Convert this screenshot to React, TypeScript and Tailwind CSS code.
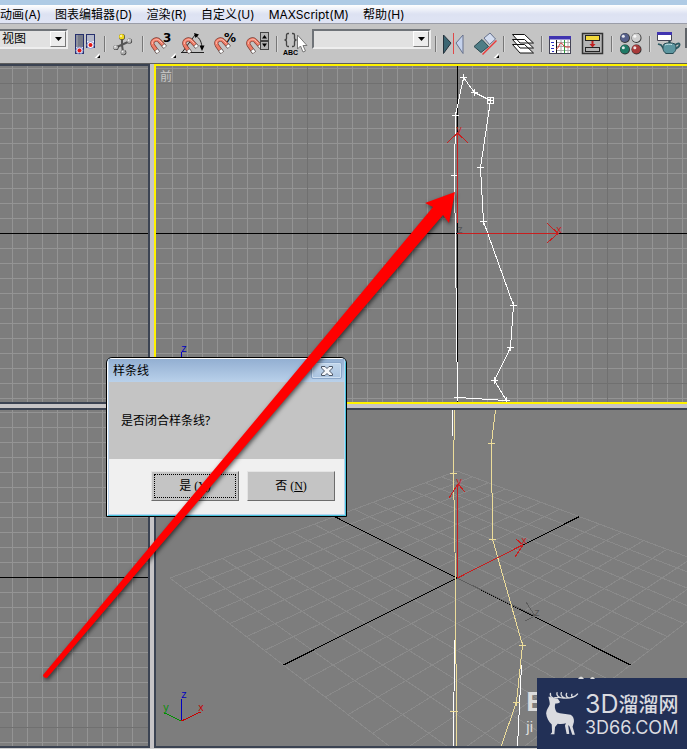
import type { ReactNode } from "react";

/* ─────────────────────────────────────────
   TOOLBAR PARTS
───────────────────────────────────────── */
function Tool({ label, children }: { label: string; children: ReactNode }) {
  return (
    <button type="button" aria-label={label} className="h-6 w-6 shrink-0">
      <svg viewBox="0 0 24 24" className="h-6 w-6 overflow-visible">
        {children}
      </svg>
    </button>
  );
}

function Separator({ className = "mx-1.5" }: { className?: string }) {
  return (
    <div
      className={`h-4 w-0.5 shrink-0 border-l border-[#777] bg-[#d8d8d8] ${className}`}
    />
  );
}

function Dropdown({
  label,
  options,
  className,
}: {
  label: string;
  options: string[];
  className: string;
}) {
  return (
    <div
      className={`relative mt-[5px] h-5 shrink-0 self-start border-2 border-t-[#6f7378] border-r-[#eee] border-b-[#eee] border-l-[#6f7378] bg-[#e1e1e1] ${className}`}
    >
      <select
        aria-label={label}
        className="block h-4 w-full appearance-none pl-0.5 text-[12px] leading-4 text-black outline-none"
      >
        {options.map((o) => (
          <option key={o}>{o}</option>
        ))}
      </select>
      <span className="pointer-events-none absolute top-0 right-0 flex h-4 w-4 items-center justify-center border border-t-white border-r-[#777] border-b-[#777] border-l-white bg-[#ececec]">
        <svg viewBox="0 0 7 4" className="h-1 w-[7px]">
          <path d="M0 0h7L3.5 4z" />
        </svg>
      </span>
    </div>
  );
}

function Flyout() {
  return (
    <g>
      <path d="M25.5 21v5h-5z" fill="#fff" />
      <path d="M26 23v3h-3z" />
    </g>
  );
}

function Magnet() {
  return (
    <g fill="none">
      <path
        d="M15 15 9.500 9C6.500 5.500 0 9 3 13.500L8 20.500"
        stroke="#7c3a30"
        strokeWidth="4.200"
      />
      <path
        d="M15 15 9.500 9C6.500 5.500 0 9 3 13.500L8 20.500"
        stroke="#ee7d68"
        strokeWidth="3"
      />
      <path
        d="M12.500 11.500 9 8C6.500 6 1.500 8.500 2.500 12"
        stroke="#ffb9aa"
        strokeWidth="1"
      />
      <path d="m13 12.800 2.300 2.500M6 17.700l2.300 3.100" stroke="#666" strokeWidth="4.200" />
      <path d="m13.300 13.200 1.700 1.800M6.300 18.200l1.700 2.200" stroke="#fff" strokeWidth="3" />
    </g>
  );
}

function Ball({
  x,
  y,
  r,
  fill,
}: {
  x: number;
  y: number;
  r: number;
  fill: string;
}) {
  return (
    <g>
      <circle cx={x} cy={y} r={r} fill="#333" />
      <circle cx={x - 0.3} cy={y - 0.3} r={r * 0.88} fill={fill} />
      <circle cx={x - r / 3} cy={y - r / 3} r={r * 0.3} fill="#fff" opacity=".85" />
    </g>
  );
}

function Toolbar() {
  return (
    <div className="flex h-10 shrink-0 items-center overflow-hidden border-b border-[#5d5d5d] bg-[#c4c4c4]">
      <Dropdown
        label="参考坐标系"
        options={["视图", "屏幕", "世界"]}
        className="mr-1.5 w-[68px] border-l-0"
      />
      <Tool label="使用轴点中心">
        <rect x="1.500" y="2.500" width="8" height="19" fill="#e4e6f2" stroke="#26306e" />
        <rect x="2" y="3" width="7" height="12" fill="#777b88" />
        <path d="M3 3v12" stroke="#a5a9b5" />
        <circle cx="5.500" cy="18.500" r="3.500" fill="none" stroke="#8a94d0" />
        <circle cx="5.500" cy="18.500" r="2" fill="#e01818" />
        <rect x="12.500" y="2.500" width="8" height="13" fill="#f4f5fb" stroke="#26306e" />
        <rect x="13" y="3" width="7" height="6" fill="#b5b9c9" />
        <circle cx="16.500" cy="13" r="3.500" fill="#fff" stroke="#8a94d0" />
        <circle cx="16.500" cy="13" r="2" fill="#e01818" />
        <Flyout />
      </Tool>
      <Separator />
      <Tool label="选择并操纵">
        <path
          d="M10 5v9M17 9.500 4 15.500M10 13l1 7"
          stroke="#555"
          strokeWidth="2"
          fill="none"
        />
        <Ball x={10} y={5} r={3} fill="#f2d91c" />
        <Ball x={17.5} y={9} r={2.6} fill="#bbb" />
        <Ball x={4} y={15.5} r={2.6} fill="#bbb" />
        <Ball x={11.5} y={20.5} r={2.8} fill="#aaa" />
      </Tool>
      <Separator />
      <div className="flex gap-2">
        <Tool label="捕捉开关">
          <Magnet />
          <text x="13" y="10" className="font-['DejaVu_Sans'] text-[12px] font-bold">
            3
          </text>
          <Flyout />
        </Tool>
        <Tool label="角度捕捉">
          <path d="M-1 20.500h23M0 20.500 13 3" stroke="#222" />
          <path d="M14 4c4 2 6 7 6 13" fill="none" stroke="#222" />
          <path d="m12 1 5 1.500-3.500 3.500zM17.500 13.500h5L20 19z" />
          <Magnet />
        </Tool>
        <Tool label="百分比捕捉">
          <Magnet />
          <text x="10" y="10" className="font-['DejaVu_Sans'] text-[12px] font-bold">
            %
          </text>
        </Tool>
        <Tool label="微调器捕捉">
          <Magnet />
          <rect x="14" y="0" width="9" height="18" fill="#444" />
          <path d="M15 1h7v7h-7zM15 10h7v7h-7z" fill="#b4b4b4" />
          <path d="m18.500 3 2.500 3.500h-5zM16 11.500h5L18.500 15z" />
        </Tool>
      </div>
      <Separator />
      <Tool label="编辑命名选择集">
        <path
          d="M5 1.500H4Q2.500 1.500 2.500 3v3Q2.500 8 .5 8q2 0 2 2v3q0 1.500 1.500 1.500h1M8 1.500h1q1.500 0 1.500 1.500v3q0 2 2 2-2 0-2 2v3q0 1.500-1.500 1.500H8"
          fill="none"
          stroke="#444"
          strokeWidth="1.300"
        />
        <text x="-1" y="23" className="font-['Liberation_Sans'] text-[7px] font-bold">
          ABC
        </text>
        <path
          d="M13.500 3v14l3-3 2.500 6 2.500-1-2.500-5.500h4z"
          fill="#fff"
          stroke="#777"
        />
      </Tool>
      <Dropdown
        label="命名选择集"
        options={[""]}
        className="ml-1 w-[119px] min-w-0"
      />
      <Separator className="mx-1" />
      <div className="flex gap-2">
        <Tool label="镜像">
          <path d="M2.500 3v18.500L10 11z" fill="#3c6673" stroke="#24323c" />
          <path d="M12.500 1v21" stroke="#e04848" />
          <path d="M22 3v18.500L15 11z" fill="#c5d2ec" stroke="#66718c" />
        </Tool>
        <Tool label="对齐">
          <path d="m1 14.500 8-7 6.500 7-7.500 6z" fill="#4e7d86" stroke="#2b4950" />
          <path d="m11 6 6-5 5.500 6-6 5.500z" fill="#d4ddf0" stroke="#66718c" />
          <path d="m9.500 22.500 14-14" stroke="#e83a3a" strokeWidth="1.500" />
          <Flyout />
        </Tool>
      </div>
      <Separator />
      <Tool label="层管理器">
        <path
          d="M1.500 12.500h12l9 8.500H9zM1.500 7.500h12l9 8.500H9zM1.500 2.500h12l9 8.500H9z"
          fill="#fff"
          stroke="#111"
        />
      </Tool>
      <Separator />
      <div className="flex gap-2">
        <Tool label="曲线编辑器">
          <rect x=".5" y="4.500" width="21" height="17" fill="#fff" stroke="#445" />
          <path d="M0 4h22v3.500H0z" fill="#4034b0" />
          <path d="M7.500 8v13" stroke="#111" />
          <path d="M8 10.500h13M8 14.500h13M8 18.500h13M12 8v13M19 8v13" stroke="#aaa" />
          <path d="M2 10.500h3M3 13.500h2M2 16.500h3M3 19.500h2" stroke="#2a30c0" />
          <path d="M15.500 8v13" stroke="#30a040" />
          <path d="M7 17c3 0 3-6 5-6s2 4 5 4h4" fill="none" stroke="#d03838" />
        </Tool>
        <Tool label="图解视图">
          <rect x="1.500" y="1.500" width="20" height="20" fill="#b4b4b4" stroke="#333" strokeWidth="1.500" />
          <rect x="4.500" y="3.500" width="14" height="5" fill="#f2d93c" stroke="#222" />
          <path d="M10.500 9h2v3h2l-3 3.500-3-3.500h2z" fill="#c02020" />
          <rect x="4.500" y="15.500" width="14" height="4" fill="#b4b4b4" stroke="#222" />
        </Tool>
      </div>
      <Separator />
      <Tool label="材质编辑器">
        <Ball x={6} y={6} r={5} fill="#56608a" />
        <Ball x={17.5} y={6} r={5} fill="#cfcfcf" />
        <Ball x={6} y={17.5} r={5} fill="#1f7a66" />
        <Ball x={17.5} y={17.5} r={5} fill="#a83a3a" />
      </Tool>
      <Separator />
      <Tool label="渲染场景">
        <path d="M.5.5h14v8H.5z" fill="#fff" stroke="#445" />
        <path d="M0 0h15v3H0z" fill="#4034b0" />
        <path
          d="m7 17-3-4-3-1M18 13c3-2 5-2 4.500 0s-2 3-5 4"
          fill="none"
          stroke="#2b5a62"
          strokeWidth="1.800"
        />
        <path
          d="M7 12c3-1.500 8-1.500 11 0 2 4 1 7-2 9.500H9c-3-2-4-5.500-2-9.500z"
          fill="#5c96a0"
          stroke="#264a52"
        />
        <path d="M8 13c2-1 5-1 7-.5" stroke="#cfe8ec" fill="none" />
        <circle cx="12.500" cy="10" r="1.300" fill="#264a52" />
      </Tool>
      <div className="mt-1 ml-1 h-5 grow self-start border-l-2 border-[#5f6368]" />
    </div>
  );
}

/* ─────────────────────────────────────────
   VIEWPORTS
───────────────────────────────────────── */
const menus = [
  "动画(A)",
  "图表编辑器(D)",
  "渲染(R)",
  "自定义(U)",
  "MAXScript(M)",
  "帮助(H)",
];

type Point = [number, number];

function range(from: number, to: number, step: number) {
  const out: number[] = [];
  for (let v = from; v <= to; v += step) out.push(v);
  return out;
}

function FlatGrid({
  xs,
  ys,
  darkX = [],
  darkY = [],
}: {
  xs: number[];
  ys: number[];
  darkX?: number[];
  darkY?: number[];
}) {
  return (
    <g fill="#949494">
      {xs.map((x) => (
        <rect key={`x${x}`} x={x} y="0" width="1" height="2000" />
      ))}
      {ys.map((y) => (
        <rect key={`y${y}`} x="0" y={y} width="2000" height="1" />
      ))}
      {darkX.map((x) => (
        <rect key={`dx${x}`} x={x} y="0" width="1" height="2000" fill="#707070" />
      ))}
      {darkY.map((y) => (
        <rect key={`dy${y}`} x="0" y={y} width="2000" height="1" fill="#707070" />
      ))}
    </g>
  );
}

function Vertices({ points, color }: { points: Point[]; color: string }) {
  return (
    <path
      d={points.map(([x, y]) => `M${x - 3} ${y + 0.5}h7M${x + 0.5} ${y - 3}v7`).join("")}
      stroke={color}
    />
  );
}

const axisText = "font-['Liberation_Mono',monospace] text-[10px]";

function SideViewport({ top, axis, dark }: { top: number; axis: number; dark: number }) {
  return (
    <section className="relative overflow-hidden border-y-2 border-r-2 border-[#3b4352] bg-[#7d7d7d]">
      <svg
        viewBox={`0 ${top} 148 336`}
        preserveAspectRatio="xMinYMin slice"
        shapeRendering="crispEdges"
        className="absolute inset-0 h-full w-full"
      >
        <FlatGrid
          xs={range(12, 132, 15)}
          ys={range(axis - 165, axis + 180, 15)}
          darkY={[dark]}
        />
        <rect x="0" y={axis} width="2000" height="1" fill="#000" />
      </svg>
    </section>
  );
}

const frontShape: Point[] = [
  [463, 77],
  [474, 92],
  [490, 100],
  [480, 167],
  [483, 221],
  [513, 305],
  [510, 347],
  [494, 380],
  [506, 400],
  [457, 397],
  [454, 175],
  [455, 115],
];

function FrontViewport() {
  return (
    <section className="relative overflow-hidden border-y-2 border-l-2 border-[#fff200] bg-[#7d7d7d]">
      <svg
        viewBox="156 66 531 336"
        preserveAspectRatio="xMinYMin slice"
        shapeRendering="crispEdges"
        className="absolute inset-0 h-full w-full"
      >
        <FlatGrid
          xs={range(172, 1000, 15)}
          ys={range(68, 398, 15)}
          darkX={[307, 607]}
          darkY={[83, 383]}
        />
        <rect x="457" y="60" width="1" height="350" />
        <rect x="150" y="233" width="1000" height="1" />
        <polygon
          points={frontShape.map(([x, y]) => `${x + 0.5},${y + 0.5}`).join(" ")}
          fill="none"
          stroke="#fff"
        />
        <Vertices points={frontShape} color="#fff" />
        <path d="M487.500 97.500h6v6h-6z" stroke="#fff" fill="none" />
        <rect x="457" y="133" width="1" height="90" fill="#c81e1e" />
        <rect x="457" y="233" width="101" height="1" fill="#c81e1e" />
        <path
          d="m447 143 10.500-10 10.500 10M547 223l11 10.500L547 243"
          stroke="#c81e1e"
          fill="none"
        />
        <text x="456" y="133" fill="#c81e1e" className={axisText}>
          y
        </text>
        <text x="556" y="233" fill="#c81e1e" className={axisText}>
          x
        </text>
        <text x="457" y="233" fill="#555" className={axisText}>
          z
        </text>
        <path d="M181.500 352v25" stroke="#0000c0" />
        <text x="181" y="352" fill="#0000c0" className={axisText}>
          z
        </text>
      </svg>
      <p className="relative px-1 py-[3px] text-[12px] leading-4 text-[#c8c8c8]">
        前
      </p>
    </section>
  );
}

/* ground plane cell (u, v) to screen */
function project(u: number, v: number): Point {
  const w = 1 - 0.02469 * (u + v);
  return [457 + (20.5 * (u - v)) / w, 161.4 + 416.6 / w];
}

function groundLine(a: Point, b: Point) {
  const [x1, y1] = project(a[0], a[1]);
  const [x2, y2] = project(b[0], b[1]);
  return `M${x1.toFixed(1)} ${y1.toFixed(1)}L${x2.toFixed(1)} ${y2.toFixed(1)}`;
}

function PerspectiveViewport() {
  const steps = range(-7, 7, 1).filter((n) => n !== 0);
  const grid = steps
    .map((n) => groundLine([n, -7], [n, 7]) + groundLine([-7, n], [7, n]))
    .join("");
  return (
    <section className="relative overflow-hidden border-y-2 border-l-2 border-[#3b4352] bg-[#7d7d7d]">
      <svg
        viewBox="156 410 531 336"
        preserveAspectRatio="xMinYMin slice"
        shapeRendering="crispEdges"
        className="absolute inset-0 h-full w-full"
        fill="none"
      >
        <path d={grid} stroke="#8a8a8a" />
        <path
          d={groundLine([0, -7], [0, 7]) + groundLine([-7, 0], [7, 0])}
          stroke="#000"
        />
        <path d="m457 578 78 38M526 602l9 14-10 5" stroke="#5e5e5e" />
        <text x="534" y="616" fill="#555" className={axisText}>
          z
        </text>
        <path d="M452.500 410v26M454.500 640l-1 106M521.500 665l-4 81" stroke="#fff" />
        <path
          d="m454.500 410-1 63 2 105 1 168M495.500 410l-4 33 1 96 30 106-6 57-16 46"
          stroke="#ecdc9a"
        />
        <path
          d="M450 473.500h7M488 443.500h7M489 539.500h7M519 645.500h7M522.500 642v7M513 702.500h7M516.500 699v7M450 711.500h8"
          stroke="#ecdc9a"
        />
        <g stroke="#c81e1e">
          <path d="M457.500 578v-94M457.500 578l65-33" />
          <path d="m449 498 9-14 7 8M516 539l7 6-8 12" />
        </g>
        <text x="456" y="485" fill="#c81e1e" className={axisText}>
          y
        </text>
        <text x="521" y="544" fill="#c81e1e" className={axisText}>
          x
        </text>
        <path d="M181.500 721v-22" stroke="#0000c0" />
        <path d="m181.500 721-17-8" stroke="#009000" />
        <path d="m181.500 721 19-9" stroke="#c80000" />
        <text x="181" y="698" fill="#0000c0" className={axisText}>
          z
        </text>
        <text x="163" y="711" fill="#009000" className={axisText}>
          y
        </text>
        <text x="198" y="711" fill="#c80000" className={axisText}>
          x
        </text>
      </svg>
    </section>
  );
}

/* ─────────────────────────────────────────
   OVERLAYS
───────────────────────────────────────── */
function CloseShapeDialog() {
  return (
    <div
      role="dialog"
      aria-labelledby="dialog-title"
      className="absolute top-[293px] left-[106px] w-[241px] overflow-hidden rounded-t-md border border-black bg-[#a9cbe9]"
    >
      <div className="rounded-t-[5px] border border-t-white border-r-[#48c4dc] border-b-[#48c4dc] border-l-white">
        <div className="border-x border-b border-[#b9d3ee]">
          <header className="flex h-[23px] items-center justify-between bg-linear-to-b from-[#93afd2] to-[#b9d1ea] pr-0.5 pl-1">
            <h1 id="dialog-title" className="text-[12px] leading-4 text-black">
              样条线
            </h1>
            <button
              type="button"
              aria-label="关闭"
              className="flex h-[17px] w-[31px] items-center justify-center rounded-[2px] border border-[#8ba7c9] bg-linear-to-b from-[#c3d7ec] to-[#a9c3e0] ring-1 ring-[#cfe0f2] ring-inset"
            >
              <svg viewBox="0 0 12 10" className="h-2.5 w-3">
                <path
                  d="M.5.5h3.500L6 2.500l2-2h3.500v1.500L8.500 5l3 3v1.500H8l-2-2-2 2H.5V8l3-3-3-3z"
                  fill="#f3f6fa"
                  stroke="#4c5666"
                />
              </svg>
            </button>
          </header>
          <p className="bg-[#c4c4c4] px-3 py-[30px] text-[12px] leading-[17px] text-black">
            是否闭合样条线?
          </p>
          <footer className="flex justify-end gap-2 bg-[#f0f0f0] pt-3 pr-[9px] pb-[13px] font-['Liberation_Serif','Noto_Sans_CJK_SC',serif] text-[12px] leading-4 text-black">
            <button
              type="button"
              className="h-[30px] w-[88px] border border-t-[#e4e4e4] border-r-[#6c6c6c] border-b-[#6c6c6c] border-l-[#e4e4e4] bg-[#c4c4c4] p-0.5"
            >
              <span className="flex h-full items-center justify-center border border-dotted border-black">
                是&nbsp;(<u>Y</u>)
              </span>
            </button>
            <button
              type="button"
              className="flex h-[30px] w-[88px] items-center justify-center border border-t-[#e4e4e4] border-r-[#6c6c6c] border-b-[#6c6c6c] border-l-[#e4e4e4] bg-[#c4c4c4]"
            >
              否&nbsp;(<u>N</u>)
            </button>
          </footer>
        </div>
      </div>
    </div>
  );
}

function Arrow() {
  return (
    <svg
      viewBox="40 185 420 500"
      className="pointer-events-none absolute top-[121px] left-10 h-[500px] w-[420px] overflow-visible drop-shadow-[1px_2px_2px_rgba(0,0,0,0.6)]"
    >
      <path
        d="M455 192 425 203l8 4L43 675q0 3 4 3L443 215l6 8z"
        fill="#ff0000"
      />
    </svg>
  );
}

function Watermark() {
  return (
    <div className="absolute right-0 -bottom-px flex items-end">
      <div className="pb-3.5 font-['Liberation_Sans',sans-serif] text-[#dcdcdc]">
        <p className="text-[28px] leading-8 font-bold">E</p>
        <p className="text-[15px] leading-[17px]">ji</p>
      </div>
      <div className="relative -ml-2 flex h-[71px] w-[150px] items-center bg-[#223056] pl-2 text-[#dadbe0]">
        <svg viewBox="0 0 20 3" className="absolute -top-[2px] left-10 h-[3px] w-5">
          <path d="M1 3q3-5 6 0zM13 3q2.500-4 5 0z" fill="#dcdcdc" />
        </svg>
        <svg viewBox="135 335 102 136" className="h-[45px] w-[34px] shrink-0">
          <g fill="none" stroke="#dadbe0" strokeWidth="4" strokeLinecap="round">
            <path d="M158 357c8-3 14-4 24-2 18 3 38 3 51-11M181 355c-8-2-12-9-10-15M194 356c-9-4-13-10-10-16M207 357c-6-3-10-9-7-15M219 353c-4-2-5-5-3-8M157 355c-5-3-7-8-6-13" />
          </g>
          <path
            d="M145 352c6 0 10 2 13 4l15 2 7 10c-2 4-9 5-14 5-3 8-2 18 4 26 12 6 29 4 42 8 8 4 11 13 10 22l-4 14 7 24h-8l-8-24-7-12c-10 4-20 5-29 3l-8 10-2 22h-12l5-6-1-24c-9-8-16-21-17-34 1-10 8-18 11-27 0-8-2-13-4-23z"
            fill="#dadbe0"
          />
          <path d="m210 431-5 10 3 24h-8l-5-25 4-12z" fill="#dadbe0" />
        </svg>
        <div className="ml-1.5 whitespace-nowrap">
          <p className="flex items-center leading-7">
            <span className="font-[Inter,sans-serif] text-[25px]">3D</span>
            <span className="font-['Noto_Sans_CJK_SC',sans-serif] text-[20px] font-medium">
              溜溜网
            </span>
          </p>
          <p className="font-[Inter,sans-serif] text-[18px] leading-5">3D66.COM</p>
        </div>
      </div>
    </div>
  );
}

/* ─────────────────────────────────────────
   MAIN COMPONENT
───────────────────────────────────────── */
export default function App() {
  return (
    <div className="relative flex min-h-screen flex-col overflow-hidden bg-[#c4c4c4] font-['Noto_Sans','Noto_Sans_CJK_SC',sans-serif]">
      <div className="h-[5px] shrink-0 bg-[#afcbe5]" />
      <nav className="flex h-[19px] shrink-0 items-center gap-3.5 border-b border-[#9a9da8] bg-linear-to-b from-white via-[#dde2f2] to-[#dfe4f4] pt-0.5 font-[Inter,'Noto_Sans_CJK_SC',sans-serif] text-[12px] leading-4 text-black">
        {menus.map((m) => (
          <button key={m} type="button" className="whitespace-nowrap">
            {m}
          </button>
        ))}
      </nav>
      <Toolbar />
      <main className="relative grid grow grid-cols-[150fr_533fr] grid-rows-2 gap-1 border-b border-[#d0d0d0] bg-[#c6c4c6]">
        <SideViewport top={66} axis={233} dark={83} />
        <FrontViewport />
        <SideViewport top={410} axis={577} dark={727} />
        <PerspectiveViewport />
        <CloseShapeDialog />
        <Arrow />
        <Watermark />
      </main>
    </div>
  );
}
